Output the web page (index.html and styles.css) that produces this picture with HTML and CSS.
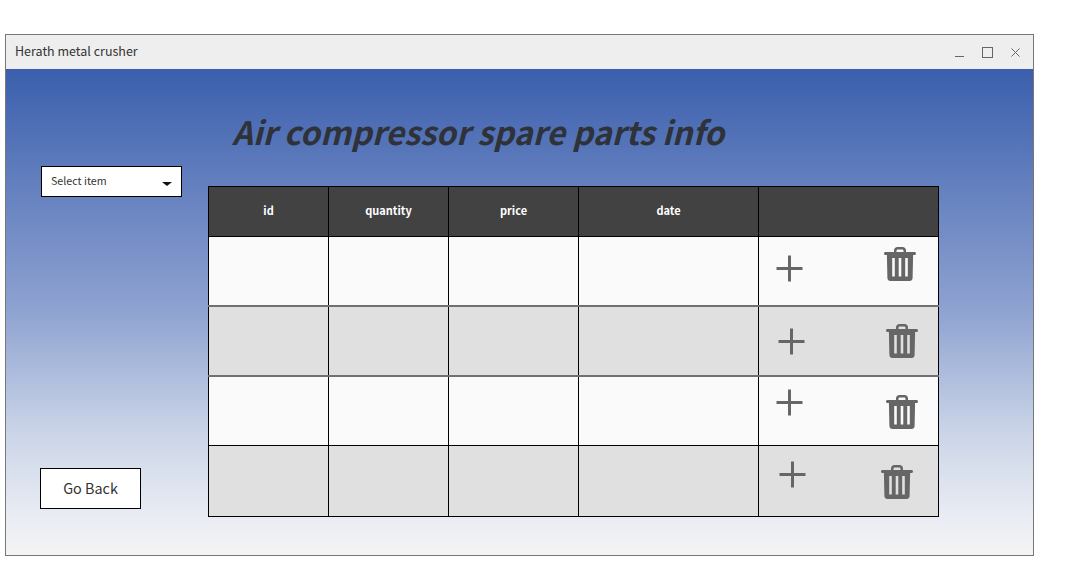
FILE: index.html
```html
<!DOCTYPE html>
<html lang="en">
<head>
  <meta charset="UTF-8" />
  <title>Herath metal crusher</title>
  <link rel="stylesheet" href="styles.css">
</head>
<body>
  <svg class="sprite" width="0" height="0">
    <symbol id="plus" viewBox="0 0 28 28">
      <path d="M13.500.5v26M.5 13.500h26" fill="none" stroke="#666" stroke-width="3" />
    </symbol>
    <symbol id="trash" viewBox="0 0 32 34">
      <path fill="#666" fill-rule="evenodd" d="M10 5V3.500C10 1.500 11.500 0 13.500 0h5C20.500 0 22 1.500 22 3.500V5h8.500c.9 0 1.500.6 1.500 1.500S31.400 8 30.500 8h-1.400l-.5 23c-.1 1.700-1.300 3-3 3H6.400c-1.700 0-2.900-1.300-3-3L2.900 8H1.500C.6 8 0 7.400 0 6.500S.6 5 1.500 5zm2.500 0h7V3.800c0-.7-.5-1.300-1.200-1.300h-4.600c-.7 0-1.200.6-1.200 1.300zM8.200 11v18.500h2.600V11zm6.500 0v18.500h2.600V11zm6.500 0v18.500h2.600V11z" />
    </symbol>
  </svg>

  <div class="window">
    <div class="titlebar">
      <span class="titlebar-name">Herath metal crusher</span>
      <div class="window-controls">
        <span class="ctl-min"></span>
        <span class="ctl-max"></span>
        <svg class="ctl-close" width="9" height="9" viewBox="0 0 9 9"><path d="M.5.5l8 8M8.500.500l-8 8" fill="none" stroke="#666" stroke-width="1" /></svg>
      </div>
    </div>

    <div class="content">
      <div class="side">
        <div class="select-box">
          <span>Select item</span>
          <span class="caret"></span>
        </div>
        <button class="back-btn">Go Back</button>
      </div>

      <div class="main">
        <h1 class="page-title">Air compressor spare parts info</h1>
        <table class="parts">
          <colgroup>
            <col class="col-a"><col class="col-a"><col class="col-b"><col class="col-c"><col class="col-c">
          </colgroup>
          <thead>
            <tr><th>id</th><th>quantity</th><th>price</th><th>date</th><th></th></tr>
          </thead>
          <tbody>
            <tr class="r1">
              <td></td><td></td><td></td><td></td>
              <td><div class="actions">
                <svg class="ic-plus"><use href="#plus" /></svg>
                <svg class="ic-trash"><use href="#trash" /></svg>
              </div></td>
            </tr>
            <tr class="r2">
              <td></td><td></td><td></td><td></td>
              <td><div class="actions">
                <svg class="ic-plus"><use href="#plus" /></svg>
                <svg class="ic-trash"><use href="#trash" /></svg>
              </div></td>
            </tr>
            <tr class="r3">
              <td></td><td></td><td></td><td></td>
              <td><div class="actions">
                <svg class="ic-plus"><use href="#plus" /></svg>
                <svg class="ic-trash"><use href="#trash" /></svg>
              </div></td>
            </tr>
            <tr class="r4">
              <td></td><td></td><td></td><td></td>
              <td><div class="actions">
                <svg class="ic-plus"><use href="#plus" /></svg>
                <svg class="ic-trash"><use href="#trash" /></svg>
              </div></td>
            </tr>
          </tbody>
        </table>
      </div>
    </div>
  </div>
</body>
</html>
```

FILE: styles.css
```css
body {
  margin: 0;
  padding: 34px 0 0 5px;
  background: #fff;
  font-family: "Noto Sans CJK SC", "Open Sans", sans-serif;
  color: #333;
}
.sprite {
  position: absolute;
}
.window {
  width: 1029px;
  height: 522px;
  box-sizing: border-box;
  border: 1px solid #777;
  display: flex;
  flex-direction: column;
}
.titlebar {
  height: 34px;
  flex: none;
  background: #eeeeee;
  display: flex;
  align-items: center;
  justify-content: space-between;
  padding: 0 13px 0 9px;
}
.titlebar-name {
  font-size: 12.500px;
  margin-bottom: 3px;
}
.window-controls {
  display: flex;
  align-items: center;
  gap: 18px;
}
.ctl-min {
  width: 9px;
  height: 1px;
  background: #666;
  margin-top: 8px;
}
.ctl-max {
  width: 9px;
  height: 9px;
  border: 1px solid #666;
}
.content {
  flex: 1;
  display: flex;
  background: linear-gradient(#3b5fad 0%, #8fa3d1 50%, #cbd5e8 75%, #e9ecf3 92%, #f4f4f4 100%);
}
.side {
  width: 202px;
  flex: none;
  box-sizing: border-box;
  padding: 97px 0 0 34px;
}
.select-box {
  width: 141px;
  height: 31px;
  margin-left: 1px;
  box-sizing: border-box;
  border: 1px solid #000;
  background: #fff;
  display: flex;
  align-items: center;
  justify-content: space-between;
  padding: 0 9px 2px;
  font-size: 10.700px;
}
.caret {
  width: 0;
  height: 0;
  margin-top: 6px;
  border-left: 5px solid transparent;
  border-right: 5px solid transparent;
  border-top: 4px solid #111;
}
.back-btn {
  display: block;
  width: 101px;
  height: 41px;
  margin-top: 271px;
  padding: 0 0 2px;
  border: 1px solid #000;
  background: #fff;
  color: #333;
  font-family: inherit;
  font-size: 14.400px;
}
.main {
  flex: 1;
}
.page-title {
  margin: 40px 0 0 24px;
  height: 77px;
  font-size: 32.200px;
  line-height: 44px;
  font-style: italic;
  font-weight: 700;
  color: #2f3238;
}
.parts {
  width: 731px;
  table-layout: fixed;
  border-collapse: collapse;
}
.col-a { width: 120px; }
.col-b { width: 130px; }
.col-c { width: 180px; }
.parts th {
  height: 46px;
  padding: 0 0 3px;
  border: 1px solid #000;
  background: #424242;
  color: #fff;
  font-size: 11px;
  font-weight: 700;
}
.parts td {
  height: 68px;
  padding: 0;
  vertical-align: top;
  border: 1px solid #000;
  background: #fafafa;
}
.parts .r2 td,
.parts .r4 td {
  background: #e0e0e0;
}
.parts .r1 td,
.parts .r2 td {
  border-bottom: 2px solid #707070;
}
.parts .r4 td { height: 70px; }
.actions {
  display: flex;
  justify-content: space-between;
  align-items: flex-start;
}
.ic-plus {
  width: 28px;
  height: 28px;
  flex: none;
}
.ic-trash {
  width: 32px;
  height: 34px;
  flex: none;
}
.r1 .actions { padding: 0 22px 0 17px; }
.r1 .ic-plus { margin-top: 18px; }
.r1 .ic-trash { margin-top: 10px; }
.r2 .actions { padding: 0 20px 0 19px; }
.r2 .ic-plus { margin-top: 21px; }
.r2 .ic-trash { margin-top: 17px; }
.r3 .actions { padding: 0 20px 0 17px; }
.r3 .ic-plus { margin-top: 12px; }
.r3 .ic-trash { margin-top: 18px; }
.r4 .actions { padding: 0 25px 0 20px; }
.r4 .ic-plus { margin-top: 15px; }
.r4 .ic-trash { margin-top: 19px; }
```
